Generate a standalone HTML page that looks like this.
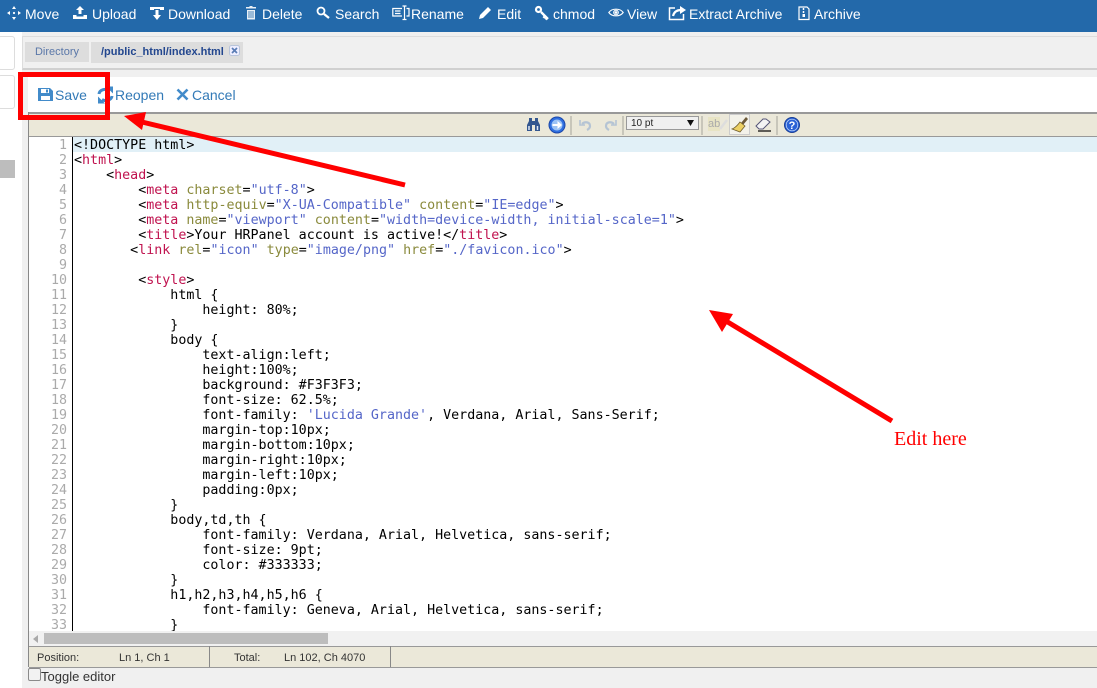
<!DOCTYPE html>
<html><head><meta charset="utf-8"><style>
html,body{margin:0;padding:0;width:1097px;height:688px;overflow:hidden;background:#fff;font-family:"Liberation Sans",sans-serif}
.a{position:absolute}
#nav{left:0;top:0;width:1097px;height:32px;background:#2369aa}
#nav span{position:absolute;top:6px;color:#fff;font-size:14px;line-height:16px;white-space:nowrap}
#nav svg{position:absolute;top:5px}
.act{position:absolute;top:87px;font-size:14px;line-height:16px;color:#337ab7}
#code{left:29px;top:137px;width:1068px;height:494px;background:#fff;overflow:hidden}
#code pre{position:absolute;margin:0;font:13.33px/15px "DejaVu Sans Mono",monospace;color:#000}
#code pre#nums{left:0;top:1px;width:38px;text-align:right;color:#aaa}
#code pre#src{left:45px;top:1px}
i{font-style:normal}
.t{color:#c0134f}.k{color:#8a8a3c}.s{color:#5566c8}
.st{position:absolute;top:652px;font-size:11px;line-height:13px;color:#333}
</style></head><body>
<div class="a" style="left:22px;top:32px;width:1075px;height:656px;background:#f0f0f0"></div>
<div class="a" style="left:-2px;top:36px;width:15px;height:32px;border:1px solid #ddd;border-radius:3px;background:#fff"></div>
<div class="a" style="left:-2px;top:75px;width:15px;height:32px;border:1px solid #ddd;border-radius:3px;background:#fff"></div>
<div class="a" style="left:0;top:160px;width:15px;height:18px;background:#bdbdbd"></div>

<div id="nav" class="a">
<svg style="left:6px" width="16" height="16" viewBox="0 0 16 16" fill="#fff"><path d="M8 1l2 3H6zM8 15l-2-3h4zM1 8l3-2v4zM15 8l-3 2V6z"/><circle cx="8" cy="8" r="1.100"/></svg><span style="left:25px">Move</span>
<svg style="left:72px" width="16" height="16" viewBox="0 0 16 16" fill="#fff"><path d="M8 1l4 4H9.500v4h-3V5H4zM1 10h3.500v1.500h7V10H15v4H1z"/></svg><span style="left:92px">Upload</span>
<svg style="left:149px" width="16" height="16" viewBox="0 0 16 16" fill="#fff"><path d="M1 2h14v3h-4V4H5v1H1zM6.500 5h3v5H12l-4 5-4-5h2.500z"/></svg><span style="left:168px">Download</span>
<svg style="left:244px" width="14" height="16" viewBox="0 0 14 16" fill="#fff" opacity=".9"><path d="M2 2h3l1-1h2l1 1h3v1.500H2zM3 5h8v9.500H3z"/><path d="M5 6v7M7 6v7M9 6v7" stroke="#2369aa" stroke-width=".8"/></svg><span style="left:262px">Delete</span>
<svg style="left:315px" width="16" height="16" viewBox="0 0 16 16" fill="none" stroke="#fff"><circle cx="6" cy="6" r="3.500" stroke-width="1.800"/><path d="M9 9l5 4" stroke-width="2.300"/></svg><span style="left:335px">Search</span>
<svg style="left:392px" width="18" height="16" viewBox="0 0 18 16" fill="none" stroke="#fff" stroke-width="1.200"><path d="M10 3.500H.8v7.500H10M14.500 3.500h2.500v7.500h-2.500M12.500 1.500v12.500M10.500 1h4M10.500 14.500h4M3 6h5.500M3 8.500h5.500"/></svg><span style="left:411px">Rename</span>
<svg style="left:477px" width="16" height="16" viewBox="0 0 16 16" fill="#fff"><path d="M11 2l3 3-8 8-4 1 1-4z"/></svg><span style="left:497px">Edit</span>
<svg style="left:534px" width="16" height="16" viewBox="0 0 16 16" fill="none" stroke="#fff"><circle cx="4.500" cy="4.500" r="2.500" stroke-width="2.200"/><path d="M7 7l7 7M11 11l-1.500 2M13 13l-1.500 1.500" stroke-width="2.300"/></svg><span style="left:553px">chmod</span>
<svg style="left:608px" width="16" height="16" viewBox="0 0 16 16" fill="none" stroke="#fff" stroke-width="1.100"><path d="M.8 7.500C4 3 12 3 15.200 7.500 12 12 4 12 .8 7.500z"/><circle cx="8" cy="7.500" r="2.300"/><circle cx="8" cy="7.500" r=".8" fill="#fff"/></svg><span style="left:627px">View</span>
<svg style="left:668px" width="19" height="16" viewBox="0 0 19 16" fill="none" stroke="#fff" stroke-width="1.500"><path d="M7 3H1.500v11.500h14V9"/><path d="M5 11c1-4 4-6 8-6" stroke-width="2.200"/><path d="M12 1l6 4-6 4z" fill="#fff" stroke="none"/></svg><span style="left:689px">Extract Archive</span>
<svg style="left:797px" width="14" height="16" viewBox="0 0 14 16" fill="none" stroke="#fff" stroke-width="1.200"><path d="M2 2h8l2 2v10.500H2z"/><path d="M6.500 3v2M6.500 6v2" stroke-width="1.500"/><rect x="5.500" y="9" width="2.500" height="3" fill="#fff" stroke="none"/></svg><span style="left:814px">Archive</span>
</div>

<div class="a" style="left:22px;top:36px;width:1075px;height:31px;background:#f0f0f0;border-top:1px solid #ddd;border-left:1px solid #ddd;border-bottom:2px solid #d0d0d0"></div>
<div class="a" style="left:25px;top:42px;width:64px;height:20px;background:#ddd;color:#5a77a8;font-size:11px;line-height:21px;text-align:center">Directory</div>
<div class="a" style="left:91px;top:42px;width:152px;height:21px;background:#ddd;color:#23478f;font-size:11px;line-height:21px;font-weight:bold"><span style="position:absolute;left:10px">/public_html/index.html</span></div>
<svg class="a" style="left:229px;top:45px" width="11" height="11" viewBox="0 0 11 11"><rect x=".5" y=".5" width="10" height="10" rx="2" fill="#eef" stroke="#b8c4da"/><path d="M3 3l5 5M8 3l-5 5" stroke="#5a7db5" stroke-width="1.700"/></svg>

<div class="a" style="left:28px;top:77px;width:1069px;height:36px;background:#fff"></div>
<svg class="a" style="left:38px;top:87px" width="15" height="15" viewBox="0 0 15 15"><path fill="#428bca" d="M0 1h12l3 3v10H0z"/><rect x="3" y="2" width="8" height="4" fill="#fff"/><rect x="8" y="2.500" width="2" height="3" fill="#428bca"/><rect x="3" y="9" width="9" height="4" fill="#fff"/></svg>
<span class="act" style="left:55px">Save</span>
<svg class="a" style="left:97px;top:86px" width="17" height="18" viewBox="0 0 17 18" fill="none" stroke="#428bca" stroke-width="3"><path d="M2 8C2.500 4 8 2 12 4.500"/><path d="M15 10c-.5 4-6 6-10 3.500"/><path d="M9 1h7v7z" fill="#428bca" stroke="none" transform="translate(0 -.5)"/><path d="M8 17H1v-7z" fill="#428bca" stroke="none" transform="translate(0 .5)"/></svg>
<span class="act" style="left:115px">Reopen</span>
<svg class="a" style="left:176px;top:88px" width="13" height="13" viewBox="0 0 13 13"><path d="M1.500 1.500l10 10M11.500 1.500l-10 10" stroke="#428bca" stroke-width="2.600"/></svg>
<span class="act" style="left:192px">Cancel</span>

<div class="a" style="left:28px;top:112px;width:1069px;height:2px;background:#999"></div>
<div class="a" style="left:28px;top:112px;width:1px;height:555px;background:#888"></div>
<div class="a" style="left:29px;top:114px;width:1068px;height:22px;background:#ebe8d9;border-bottom:1px solid #999"></div>

<svg class="a" style="left:526px;top:118px" width="15" height="14" viewBox="0 0 15 14"><path fill="#34578f" d="M3 0h3v3h3V0h3v3l2 4v6H9V7H6v6H1V7l2-4z"/><path d="M3 8v4M11.500 8v4" stroke="#dfe8f5" stroke-width="1.500"/></svg>
<svg class="a" style="left:548px;top:116px" width="18" height="18" viewBox="0 0 18 18"><circle cx="9" cy="9" r="8" fill="#2f6fe0" stroke="#1c47a8"/><circle cx="9" cy="9" r="5.500" fill="#9cc3f5"/><path d="M4.500 8h5V5l4.500 4-4.500 4v-3h-5z" fill="#fff"/></svg>
<div class="a" style="left:570px;top:116px;width:2px;height:19px;background:#c8c6ba"></div>
<svg class="a" style="left:578px;top:117px" width="15" height="15" viewBox="0 0 15 15" fill="none" stroke="#b5c4d4" stroke-width="2.200"><path d="M4 7c3-3 8-2 8 2 0 2-1 3-3 4"/><path d="M2 3v5h5" stroke-width="1.600"/></svg>
<svg class="a" style="left:603px;top:117px" width="15" height="15" viewBox="0 0 15 15" fill="none" stroke="#b5c4d4" stroke-width="2.200"><path d="M11 7C8 4 3 5 3 9c0 2 1 3 3 4"/><path d="M13 3v5H8" stroke-width="1.600"/></svg>
<div class="a" style="left:622px;top:116px;width:2px;height:19px;background:#c8c6ba"></div>
<div class="a" style="left:626px;top:116px;width:71px;height:12px;background:#f0f0f0;border:1px solid #999;font-size:10px;line-height:13px;color:#222;text-indent:4px">10 pt</div>
<svg class="a" style="left:687px;top:120px" width="7" height="6" viewBox="0 0 7 6"><path d="M0 0h7L3.500 6z" fill="#111"/></svg>
<div class="a" style="left:701px;top:116px;width:2px;height:19px;background:#c8c6ba"></div>
<span class="a" style="left:708px;top:117px;font-size:11px;line-height:14px;color:#aaa;background:#e8e4c4">ab</span>
<svg class="a" style="left:719px;top:117px" width="9" height="15" viewBox="0 0 9 15"><path d="M1 12L8 3" stroke="#ddd" stroke-width="2.500"/></svg>
<div class="a" style="left:729px;top:114px;width:19px;height:19px;background:#f3f2ea;border:1px solid #ccc"></div>
<svg class="a" style="left:731px;top:116px" width="18" height="18" viewBox="0 0 18 18"><path d="M10 7l5-6 2 2-5 6z" fill="#6d5a3a"/><path d="M9 6l5 4-5 6-8-3c3-1 5-3 8-7z" fill="#ecd064" stroke="#6d5b2a" stroke-width=".8"/></svg>
<svg class="a" style="left:755px;top:117px" width="17" height="16" viewBox="0 0 17 16"><path d="M1 9l7-7h3l4 3-7 7H4z" fill="#f4f4f4" stroke="#557" stroke-width="1"/><path d="M3 14h13" stroke="#000" stroke-width="1.200"/></svg>
<div class="a" style="left:776px;top:116px;width:2px;height:19px;background:#c8c6ba"></div>
<svg class="a" style="left:784px;top:117px" width="16" height="16" viewBox="0 0 16 16"><circle cx="8" cy="8" r="7.500" fill="#2a62d6" stroke="#1b3f95"/><circle cx="8" cy="8" r="5.800" fill="none" stroke="#cfe0fa" stroke-width=".7"/><text x="8" y="12" text-anchor="middle" font-family="Liberation Sans" font-weight="bold" font-size="11" fill="#fff">?</text></svg>

<div id="code" class="a">
<div class="a" style="left:44px;top:0;width:1024px;height:15px;background:#e1f0f7"></div>
<div class="a" style="left:43px;top:0;width:1px;height:494px;background:#000"></div>
<pre id="nums" class="a">1
2
3
4
5
6
7
8
9
10
11
12
13
14
15
16
17
18
19
20
21
22
23
24
25
26
27
28
29
30
31
32
33</pre>
<pre id="src" class="a">&lt;!DOCTYPE html&gt;
&lt;<i class="t">html</i>&gt;
    &lt;<i class="t">head</i>&gt;
        &lt;<i class="t">meta</i> <i class="k">charset</i>=<i class="s">"utf-8"</i>&gt;
        &lt;<i class="t">meta</i> <i class="k">http-equiv</i>=<i class="s">"X-UA-Compatible"</i> <i class="k">content</i>=<i class="s">"IE=edge"</i>&gt;
        &lt;<i class="t">meta</i> <i class="k">name</i>=<i class="s">"viewport"</i> <i class="k">content</i>=<i class="s">"width=device-width, initial-scale=1"</i>&gt;
        &lt;<i class="t">title</i>&gt;Your HRPanel account is active!&lt;/<i class="t">title</i>&gt;
       &lt;<i class="t">link</i> <i class="k">rel</i>=<i class="s">"icon"</i> <i class="k">type</i>=<i class="s">"image/png"</i> <i class="k">href</i>=<i class="s">"./favicon.ico"</i>&gt;

        &lt;<i class="t">style</i>&gt;
            html {
                height: 80%;
            }
            body {
                text-align:left;
                height:100%;
                background: #F3F3F3;
                font-size: 62.5%;
                font-family: <i class="s">'Lucida Grande'</i>, Verdana, Arial, Sans-Serif;
                margin-top:10px;
                margin-bottom:10px;
                margin-right:10px;
                margin-left:10px;
                padding:0px;
            }
            body,td,th {
                font-family: Verdana, Arial, Helvetica, sans-serif;
                font-size: 9pt;
                color: #333333;
            }
            h1,h2,h3,h4,h5,h6 {
                font-family: Geneva, Arial, Helvetica, sans-serif;
            }</pre>
</div>

<div class="a" style="left:29px;top:631px;width:1068px;height:15px;background:#f1f1f1"></div>
<svg class="a" style="left:33px;top:635px" width="6" height="8" viewBox="0 0 6 8"><path d="M5 0v8L0 4z" fill="#aaa"/></svg>
<div class="a" style="left:44px;top:633px;width:284px;height:11px;background:#bdbdbd"></div>
<div class="a" style="left:29px;top:646px;width:1068px;height:20px;background:#ebe8d9;border-top:1px solid #999;border-bottom:1px solid #999"></div>
<div class="a" style="left:209px;top:646px;width:1px;height:21px;background:#888"></div>
<div class="a" style="left:390px;top:646px;width:1px;height:21px;background:#888"></div>
<span class="st" style="left:37px">Position:</span>
<span class="st" style="left:119px">Ln 1, Ch 1</span>
<span class="st" style="left:234px">Total:</span>
<span class="st" style="left:284px">Ln 102, Ch 4070</span>
<div class="a" style="left:28px;top:668px;width:11px;height:11px;background:#f2f2f2;border:1px solid #8a8a8a;border-radius:2px"></div>
<span class="a" style="left:41px;top:669px;font-size:13px;line-height:15px;color:#333">Toggle editor</span>

<svg class="a" style="left:0;top:0" width="1097" height="688" viewBox="0 0 1097 688">
<rect x="20.500" y="74.500" width="87" height="43" fill="none" stroke="#f00" stroke-width="5"/>
<path d="M405 185L142 122" stroke="#f00" stroke-width="5" fill="none"/>
<path d="M124 116L146 112 142 130z" fill="#f00"/>
<path d="M892 421L726 321" stroke="#f00" stroke-width="5" fill="none"/>
<path d="M709 310L733 314 722 332z" fill="#f00"/>
<text x="894" y="445" font-family="Liberation Serif" font-size="20" fill="#f00">Edit here</text>
</svg>
</body></html>
